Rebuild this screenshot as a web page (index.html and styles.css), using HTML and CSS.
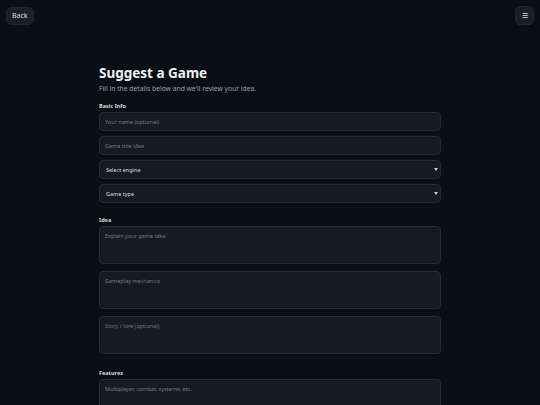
FILE: index.html
```html
<!DOCTYPE html>
<html lang="en">
  <head>
    <meta charset="UTF-8" />
    <title>Suggest a Game</title>
    <link rel="stylesheet" href="styles.css">
  </head>
  <body>
    <div class="topbar">
      <button class="back-btn">Back</button>
      <button class="menu-btn">&#9776;</button>
    </div>

    <div class="container">
      <h1>Suggest a Game</h1>
      <p class="subtitle">Fill in the details below and we'll review your idea.</p>

      <div class="section">
        <label class="section-title">Basic Info</label>
        <input type="text" placeholder="Your name (optional)" />
        <input type="text" placeholder="Game title idea" />
        <div class="select-wrap">
          <select>
            <option>Select engine</option>
          </select>
        </div>
        <div class="select-wrap">
          <select>
            <option>Game type</option>
          </select>
        </div>
      </div>

      <div class="section">
        <label class="section-title">Idea</label>
        <textarea placeholder="Explain your game idea"></textarea>
        <textarea placeholder="Gameplay mechanics"></textarea>
        <textarea placeholder="Story / lore (optional)"></textarea>
      </div>

      <div class="section">
        <label class="section-title">Features</label>
        <textarea placeholder="Multiplayer, combat, systems, etc."></textarea>
      </div>
    </div>
  </body>
</html>
```

FILE: styles.css
```css
body {
  font-family: "Noto Sans", sans-serif;
  background-color: #0b0e14;
  color: #e6e8ec;
  margin: 0;
  padding: 6px;
}

.topbar {
  display: flex;
  justify-content: space-between;
  align-items: center;
}

.topbar button {
  background-color: #1a1e26;
  color: #d8dbe0;
  border: 1px solid #22262f;
  border-radius: 5px;
  font-family: "Noto Sans", sans-serif;
  cursor: pointer;
}

.back-btn {
  height: 18px;
  padding: 0 5px;
  font-size: 7px;
}

.menu-btn {
  width: 19px;
  height: 19px;
  padding: 0;
  font-size: 7px;
}

.container {
  width: 342px;
  margin: 0 auto;
  padding-top: 39px;
}

h1 {
  font-size: 13.5px;
  font-weight: 700;
  margin: 0;
  line-height: 18px;
  color: #eef0f3;
}

.subtitle {
  font-size: 6.75px;
  color: #9aa0aa;
  margin: 2px 0 8px 0;
}

.section {
  display: flex;
  flex-direction: column;
  gap: 5px;
  margin-bottom: 12px;
}

.section-title {
  font-size: 5.5px;
  font-weight: 700;
  color: #d6d9de;
  margin-top: 1px;
  margin-bottom: -3px;
}

input,
select,
textarea {
  box-sizing: border-box;
  width: 100%;
  background-color: #161a22;
  border: 1px solid #252a34;
  border-radius: 4px;
  color: #d8dbe0;
  font-family: "Noto Sans", sans-serif;
  font-size: 5.5px;
  padding: 0 5px;
  outline: none;
}

input,
select {
  height: 19px;
  display: block;
}

select {
  appearance: none;
  -webkit-appearance: none;
  padding-left: 6px;
}

.select-wrap {
  position: relative;
}

.select-wrap::after {
  content: "";
  position: absolute;
  right: 3px;
  top: 8px;
  width: 0;
  height: 0;
  border-top: 3px solid #c8ccd2;
  border-left: 2.5px solid transparent;
  border-right: 2.5px solid transparent;
  pointer-events: none;
}

textarea {
  display: block;
  height: 38px;
  padding: 5px;
  margin-bottom: 2px;
  resize: none;
}

input::placeholder,
textarea::placeholder {
  color: #737984;
}
```
